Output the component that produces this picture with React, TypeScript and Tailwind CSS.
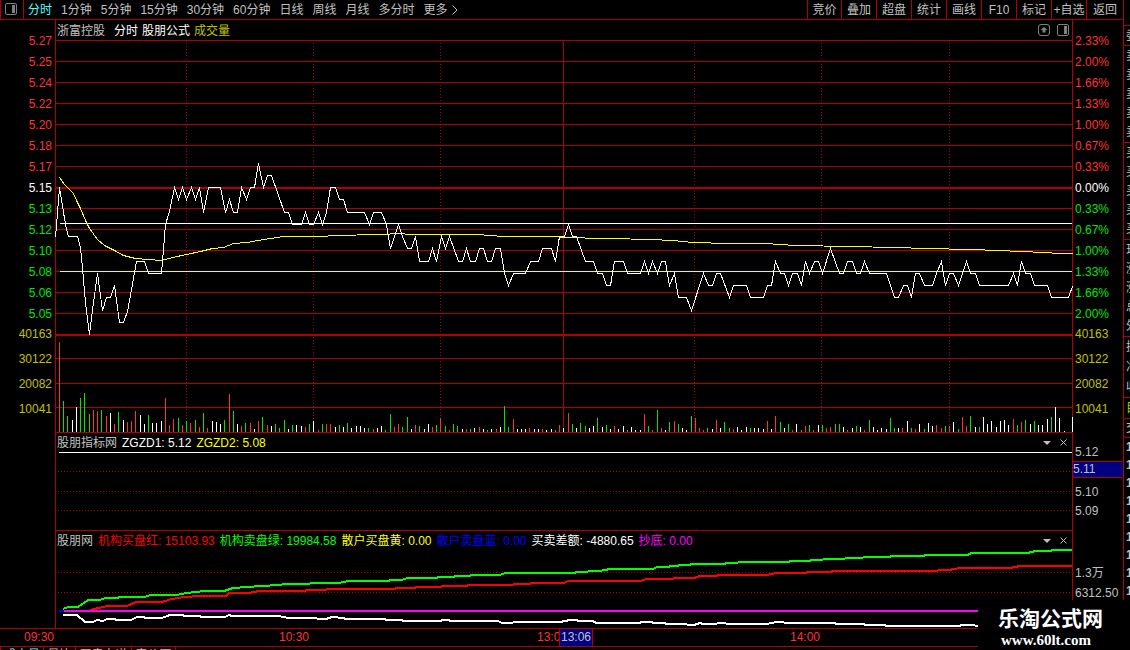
import { ReactNode } from "react";

const periods = [
  "分时",
  "1分钟",
  "5分钟",
  "15分钟",
  "30分钟",
  "60分钟",
  "日线",
  "周线",
  "月线",
  "多分时",
];

const tools = ["叠加", "超盘", "统计", "画线", "F10", "标记", "+自选"];

const prices = [
  "5.27", "5.25", "5.24", "5.22", "5.20", "5.18", "5.17",
  "5.15", "5.13", "5.12", "5.10", "5.08", "5.06", "5.05",
];

const percents = [
  "2.33%", "2.00%", "1.66%", "1.33%", "1.00%", "0.67%", "0.33%",
  "0.00%", "0.33%", "0.67%", "1.00%", "1.33%", "1.66%", "2.00%",
];

const volumes = ["40163", "30122", "20082", "10041"];

const priceLine =
  "55,237 59,187 64,218 66,229 68,236 77,236 80,247 82,268 85,302 89,334 93,302 97,273 102,310 106,297 110,297 114,285 119,322 123,322 127,311 131,289 136,261 144,261 148,273 161,273 165,224 169,211 174,187 178,199 182,187 186,199 191,187 195,199 199,187 203,212 208,187 220,187 225,212 229,199 233,212 237,212 241,187 246,199 250,187 254,187 258,163 263,187 267,175 271,175 284,212 288,212 292,224 301,224 305,212 309,224 313,224 318,212 322,224 326,212 330,187 335,187 339,199 343,199 347,212 364,212 369,224 373,212 381,212 386,224 390,248 398,224 402,236 407,248 411,248 415,236 419,261 428,261 432,248 436,261 441,236 445,248 449,236 458,261 462,261 466,248 470,261 475,261 479,248 483,248 487,261 491,261 495,248 500,248 504,273 508,285 513,273 525,273 530,261 538,261 542,248 551,248 555,261 559,236 564,236 568,224 572,236 576,236 585,261 593,261 597,273 602,273 606,285 610,285 614,261 623,261 627,273 640,273 644,261 648,273 652,261 657,273 661,261 665,261 669,285 674,273 678,297 686,297 691,310 703,273 708,285 712,285 716,273 720,273 729,297 733,285 746,285 750,297 763,297 767,285 771,285 775,261 780,273 784,273 788,285 792,273 797,273 801,285 805,261 809,273 814,261 818,261 822,273 830,248 839,273 843,273 847,261 852,261 856,273 860,273 864,261 869,273 886,273 894,297 898,297 903,285 907,285 911,297 915,273 919,273 924,285 932,285 936,273 941,261 945,285 949,273 953,273 958,285 966,261 970,273 975,273 979,285 1008,285 1013,273 1017,285 1021,261 1025,273 1030,273 1034,285 1047,285 1051,297 1068,297 1072,286";

const averageLine =
  "59,177 64,184 68,188 73,193 76,200 80,208 85,220 89,228 97,239 104,245 114,250 123,255 135,258 147,259 161,260 172,257 186,254 200,251 212,248 223,247 233,243 247,242 257,240 270,238 283,236 318,236 338,235 375,234 404,233 405,234 477,234 503,236 558,236 559,237 609,238 650,239 672,240 692,242 728,243 765,243 795,245 850,246 893,247 927,248 969,249 999,250 1020,251 1045,252 1058,253 1072,253";

// one bar per minute: colour letter and height
const volumeBars =
  "r90 g31 g16 w12 w25 g34 g39 g18 r22 r21 g22 r16 w19 r8 g20 w12 r10 r11 r21 w17 w8 g17 w9 w9 w11 r34 r7 r13 g14 r7 g11 r9 g12 r5 g19 r4 w11 w10 w8 g12 r38 g21 w8 r6 g9 r9 w3 r11 g15 r7 w6 g8 g4 g12 w3 g7 w7 w6 r5 g8 w11 r2 g8 r8 r8 w5 g7 w5 g9 w4 w6 w6 w4 g4 r3 w4 w6 g2 g18 r5 r8 g5 g15 w3 r7 g6 w3 w8 r5 g7 r14 g6 r2 g8 g6 w3 r3 g3 w4 r5 w3 g2 w3 r3 w5 g26 g5 r13 w3 w3 w3 r4 w3 w3 r3 w2 w3 g2 r7 w4 r19 g8 w4 g9 g6 w4 w6 g14 w5 g7 w3 r6 w3 w6 g2 w5 w2 w2 r18 g6 r2 g22 r4 w2 g10 r11 g8 w4 w2 g16 r14 r4 r2 g4 w3 r12 w4 g10 g4 r3 w5 w2 w5 g4 w4 w4 w3 r11 w3 r16 g10 w4 g8 r2 w8 g2 r6 g7 r2 w7 g7 r4 r5 g8 g8 w5 r2 w4 g6 w5 r2 g12 w5 w2 w4 w3 g14 g4 w4 r4 w11 g4 r3 w8 g3 w9 w6 r7 r4 g6 r6 w10 g3 r15 r6 g16 w5 g5 w15 w8 w11 w5 w11 w12 w7 r13 g7 r10 g12 w8 g11 w7 w7 w13 g15 w25 w14 w1 w0 w15".split(
    " "
  );

const barColors: Record<string, string> = {
  r: "#ff3232",
  g: "#00e600",
  w: "#ffffff",
};

const sellLine =
  "63,609 68,607 78,607 88,600 99,600 106,598 118,598 119,597 145,597 150,595 177,595 186,593 196,592 205,591 224,591 233,588 247,587 262,586 279,585 285,584 309,584 311,583 339,583 348,581 389,581 390,580 402,580 407,578 437,578 438,577 454,577 455,576 470,576 471,575 500,575 505,573 571,573 580,572 597,571 607,570 608,569 653,569 657,567 669,567 670,566 678,566 679,565 690,565 691,564 725,564 726,563 750,562 789,562 790,561 810,561 811,560 835,559 856,558 870,557 890,557 891,556 924,556 925,555 968,555 971,553 1026,553 1033,552 1034,551 1051,551 1052,550 1072,550";

const buyLine =
  "90,610 103,607 107,606 127,606 136,602 162,602 172,599 184,597 200,596 226,596 229,593 249,593 259,591 305,591 306,590 326,590 327,589 395,589 396,588 415,588 416,587 441,587 442,586 467,586 468,585 513,585 514,584 530,584 531,583 564,583 568,581 641,581 646,579 673,579 674,578 694,578 700,576 717,576 718,575 767,575 776,573 806,573 807,572 831,572 832,571 936,571 940,570 951,570 952,569 962,568 1012,568 1013,567 1022,566 1072,566";

const spreadLine =
  "63,615 77,615 85,622 93,622 97,620 103,621 107,619 114,619 117,620 131,620 137,617 144,617 145,618 162,618 170,615 183,615 184,616 200,616 201,617 225,617 229,615 232,616 278,616 289,618 316,618 318,619 326,619 332,617 343,618 346,619 385,619 386,620 402,620 403,621 441,621 442,620 449,620 450,621 498,621 502,623 512,623 514,622 560,622 570,620 577,620 578,621 593,621 596,623 640,623 641,622 652,622 653,623 665,623 666,624 686,624 688,625 694,625 700,623 703,624 716,624 718,623 725,623 727,624 767,624 776,622 783,622 785,623 835,623 836,624 864,624 865,625 885,625 886,626 960,626 961,625 974,625 976,626 1072,626";

const quoteRows = [
  { chars: ["委"], style: "h-5 text-[#c0c0c0]" },
  { chars: ["卖", "卖", "卖", "卖", "卖"], style: "h-[97px] text-[#c0c0c0]" },
  { chars: ["买", "买", "买", "买", "买"], style: "h-[97px] text-[#c0c0c0]" },
  { chars: ["现", "涨", "涨", "总", "外"], style: "h-[97px] text-[#c0c0c0]" },
  { chars: ["换", "净", "收"], style: "h-[61px] text-[#c0c0c0]" },
  { chars: ["目"], style: "h-[21px] text-[#c0c000]" },
  { chars: ["交"], style: "h-[19px] text-[#c0c0c0]" },
  {
    chars: ["1", "1", "1", "1", "1", "1", "1", "1", "1"],
    style: "h-[163px] font-bold text-[#c0c0c0]",
  },
];

const axisColor = (i: number) =>
  i < 7 ? "text-[#ff3232]" : i === 7 ? "text-white" : "text-[#00e600]";

const PanelIcon = () => (
  <svg width="13" height="12" viewBox="0 0 13 12" fill="none">
    <rect x="0.5" y="0.5" width="11" height="11" rx="1.5" stroke="#808080" />
    <rect x="7" y="2" width="3" height="8" fill="#808080" />
  </svg>
);

const Chart = ({
  viewBox,
  className,
  children,
}: {
  viewBox: string;
  className: string;
  children: ReactNode;
}) => (
  <svg
    className={`block w-full overflow-visible ${className}`}
    viewBox={viewBox}
    preserveAspectRatio="none"
    shapeRendering="crispEdges"
    fill="none"
  >
    {children}
  </svg>
);

const VolumeScale = () => (
  <div className="-mt-[3px] leading-[25px] text-[#c0c000]">
    {volumes.map((volume) => (
      <div key={volume}>{volume}</div>
    ))}
  </div>
);

const PanelButtons = () => (
  <div className="ml-auto flex items-center gap-[9px] pr-[5px]">
    <button aria-label="菜单">
      <svg width="8" height="4" viewBox="0 0 8 4">
        <path d="M0 0H8L4 4Z" fill="#c0c0c0" />
      </svg>
    </button>
    <button aria-label="关闭">
      <svg width="7" height="7" viewBox="0 0 7 7">
        <path d="M0.5 0.5L6.5 6.5M6.5 0.5L0.5 6.5" stroke="#c0c0c0" />
      </svg>
    </button>
  </div>
);

const Toolbar = () => (
  <nav className="flex h-5 border-b border-l border-[#b00000] text-[#c0c0c0]">
    <button
      aria-label="侧栏"
      className="flex w-[23px] items-center border-r border-[#b00000] pb-[2px] pl-1"
    >
      <PanelIcon />
    </button>
    <div className="flex gap-[9px] pl-1">
      {periods.map((period, i) => (
        <button key={period} className={i === 0 ? "text-[#54fcfc]" : ""}>
          {period}
        </button>
      ))}
      <button className="flex items-center gap-1">
        更多
        <svg width="6" height="10" viewBox="0 0 6 10" fill="none">
          <path d="M0.5 0.5L5 5L0.5 9.5" stroke="#c0c0c0" />
        </svg>
      </button>
    </div>
    <div className="ml-auto flex">
      <button className="w-[34px] border-l border-[#b00000]">竞价</button>
      {tools.map((tool) => (
        <button
          key={tool}
          className="w-[35px] border-l border-[#b00000] whitespace-nowrap"
        >
          {tool}
        </button>
      ))}
      <button className="w-[37px] border-l border-[#b00000]">返回</button>
    </div>
  </nav>
);

const PricePanel = () => (
  <section className="flex">
    <div className="w-[55px] pt-[11px] pr-[3px] text-right">
      {prices.map((price, i) => (
        <div key={price} className={`h-[21px] leading-[21px] ${axisColor(i)}`}>
          {price}
        </div>
      ))}
      <VolumeScale />
    </div>
    <div className="relative flex-1 border-b border-l border-[#b00000]">
      <header className="flex h-5 items-center pt-px pl-px">
        <span className="text-[#c0c0c0]">浙富控股</span>
        <span className="pl-[9px] text-white">分时</span>
        <span className="pl-1 text-white">股朋公式</span>
        <span className="pl-1 text-[#c0c000]">成交量</span>
        <div className="ml-auto flex items-center gap-[6px] pr-[2px] pb-px">
          <button aria-label="展开">
            <svg width="13" height="12" viewBox="0 0 13 12" fill="none">
              <rect x="0.5" y="0.5" width="11" height="11" rx="2.5" stroke="#808080" />
              <path d="M6 3L9.5 6H7.5V8.5H4.5V6H2.5Z" fill="#808080" />
            </svg>
          </button>
          <button aria-label="分栏">
            <PanelIcon />
          </button>
        </div>
      </header>
      <Chart viewBox="56 40 1016 392" className="h-[392px]">
        <g transform="translate(0.5 0.5)">
          {prices.map((price, i) => (
            <path
              key={price}
              d={`M55.5 ${40 + i * 21}H1071.5`}
              stroke="#b00000"
            />
          ))}
          <path
            d="M55.5 188H1071.5M55.5 334H1071.5M55.5 335H1071.5M55.5 358H1071.5M55.5 383H1071.5M55.5 407H1071.5M563 40V432"
            stroke="#b00000"
          />
          <path
            d="M186 39.5V432M313 39.5V432M440 39.5V432M694 39.5V432M821 39.5V432M949 39.5V432"
            stroke="#b00000"
            strokeDasharray="1 2"
          />
          {volumeBars.map((bar, i) => (
            <path
              key={i}
              d={`M${59 + Math.round((i * 1013) / 239)} 431.5v-${bar.slice(1)}`}
              stroke={barColors[bar[0]]}
            />
          ))}
          <path d="M59 223H1071.5" stroke="#ffffff" />
          <path d="M59 271H1071.5" stroke="#ffff00" />
          <polyline points={averageLine} stroke="#ffff00" />
          <polyline points={priceLine} stroke="#ffffff" />
        </g>
      </Chart>
    </div>
    <div className="w-[51px] border-l border-[#b00000] pt-[11px] pl-[2px]">
      {percents.map((percent, i) => (
        <div key={i} className={`h-[21px] leading-[21px] ${axisColor(i)}`}>
          {percent}
        </div>
      ))}
      <VolumeScale />
    </div>
  </section>
);

const LevelPanel = () => (
  <section className="flex pl-[55px]">
    <div className="relative flex-1 border-b border-l border-[#b00000]">
      <header className="flex h-[19px] items-center gap-[5px] pl-px">
        <span className="text-[#c0c0c0]">股朋指标网</span>
        <span className="text-white">ZGZD1: 5.12</span>
        <span className="text-[#ffff00]">ZGZD2: 5.08</span>
        <PanelButtons />
      </header>
      <Chart viewBox="56 452 1016 78" className="h-[78px]">
        <path d="M59 452.5H1072" stroke="#ffffff" />
        <path
          d="M58 471.5H1070M58 491.5H1070M58 510.5H1070"
          stroke="#b00000"
          strokeDasharray="1 2"
        />
      </Chart>
    </div>
    <div className="w-[51px] border-l border-[#b00000] pt-[11px] leading-[17px] text-[#c0c0c0]">
      <div className="h-[17px] pl-[2px]">5.12</div>
      <div className="h-[17px] border-y border-[#b00000] bg-[#000080] leading-[15px]">
        5.11
      </div>
      <div className="mt-[6px] h-[17px] pl-[2px]">5.10</div>
      <div className="mt-[2px] h-[17px] pl-[2px]">5.09</div>
    </div>
  </section>
);

const FlowPanel = () => (
  <section className="flex pl-[55px]">
    <div className="relative flex-1 border-l border-[#b00000]">
      <header className="flex h-[19px] items-center gap-[5px] pl-px whitespace-nowrap">
        <span className="text-[#c0c0c0]">股朋网</span>
        <span className="text-[#ff0000]">机构买盘红: 15103.93</span>
        <span className="text-[#00ff00]">机构卖盘绿: 19984.58</span>
        <span className="text-[#ffff00]">散户买盘黄: 0.00</span>
        <span className="text-[#0000ff]">散户卖盘蓝: 0.00</span>
        <span className="text-white">买卖差额: -4880.65</span>
        <span className="text-[#ff00ff]">抄底: 0.00</span>
        <PanelButtons />
      </header>
      <Chart viewBox="56 550 1016 78" className="h-[78px]">
        <path
          d="M58 572.5H1070M58 592.5H1070"
          stroke="#b00000"
          strokeDasharray="1 2"
        />
        <g strokeWidth="2">
          <polyline points={buyLine} stroke="#ff0000" />
          <polyline points={sellLine} stroke="#00ff00" />
          <path d="M59 611H64" stroke="#0000ff" />
          <path d="M64 611H1072" stroke="#ff00ff" />
          <polyline points={spreadLine} stroke="#ffffff" />
        </g>
      </Chart>
    </div>
    <div className="w-[51px] border-l border-[#b00000] pt-[34px] pl-[2px] leading-[17px] text-[#c0c0c0]">
      <div className="h-[17px]">1.3万</div>
      <div className="mt-[3px] h-[17px]">6312.50</div>
    </div>
  </section>
);

const TimeAxis = () => (
  <div className="flex h-[19px] border-y border-[#b00000] leading-[17px] text-[#ff3232]">
    <div className="w-[55px] pr-px text-right">09:30</div>
    <div className="grid flex-1 grid-cols-[224fr_258fr_22px_34px_197fr_333fr]">
      <span />
      <span>10:30</span>
      <span className="overflow-hidden">13:0</span>
      <span className="border-x border-[#b00000] bg-[#000080] text-center text-[#c0c0c0]">
        13:06
      </span>
      <span />
      <span>14:00</span>
    </div>
  </div>
);

const BottomTabs = () => (
  <div className="flex h-[3px] overflow-hidden border-l border-[#b00000] leading-[14px] text-[#c0c0c0]">
    <button className="h-4 w-[43px] border-r border-[#b00000] text-[#54fcfc]">
      成交量
    </button>
    <button className="h-4 w-8 border-r border-[#b00000]">量比</button>
    <button className="h-4 w-14 border-r border-[#b00000]">买卖力道</button>
    <button className="h-4 w-11 border-r border-[#b00000]">竞价图</button>
  </div>
);

const QuoteStrip = () => (
  <aside className="w-[7px] overflow-hidden border-l border-[#b00000] pt-[25px]">
    {quoteRows.map((group, i) => (
      <div
        key={i}
        className={`flex flex-col border-t border-[#b00000] pl-[2px] ${group.style}`}
      >
        {group.chars.map((char, j) => (
          <div key={j} className="flex flex-1 items-center leading-[18px]">
            {char}
          </div>
        ))}
      </div>
    ))}
  </aside>
);

const App = () => {
  return (
    <div className="relative min-h-screen overflow-hidden bg-black font-['Liberation_Sans','Noto_Sans_CJK_SC',sans-serif] text-[12px] leading-[18px]">
      <div className="flex">
        <main className="min-w-0 flex-1">
          <Toolbar />
          <PricePanel />
          <LevelPanel />
          <FlowPanel />
          <TimeAxis />
          <BottomTabs />
        </main>
        <QuoteStrip />
      </div>
      <div className="absolute right-0 bottom-0 h-[50px] w-[152px] bg-black pt-[7px] pl-5 text-white">
        <p className="text-[21px] leading-6 font-bold">乐淘公式网</p>
        <p className="pl-[3px] font-['Liberation_Serif',serif] text-[15px] leading-[18px] font-bold">
          www.60lt.com
        </p>
      </div>
    </div>
  );
};

export default App;
